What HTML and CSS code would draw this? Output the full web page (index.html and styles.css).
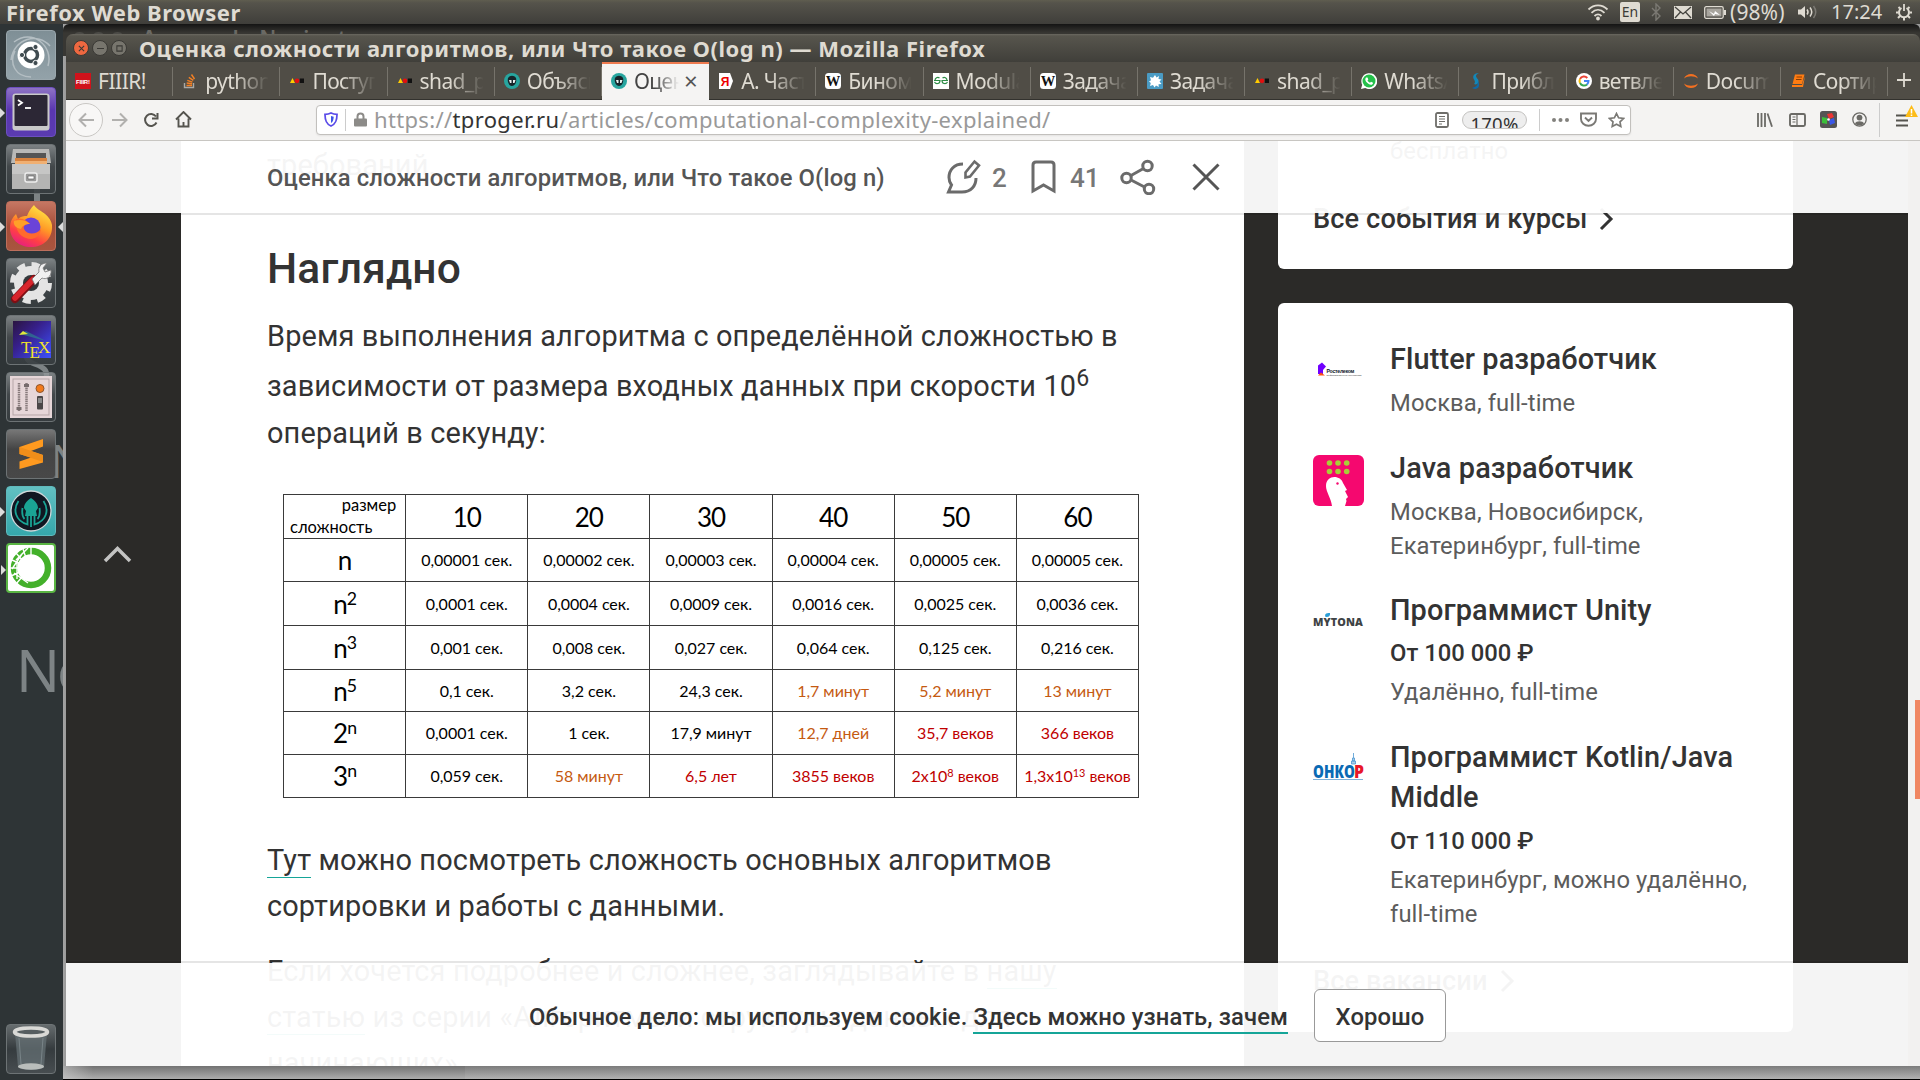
FILE: index.html
```
<!DOCTYPE html>
<html lang="ru">
<head>
<meta charset="utf-8">
<title>Оценка сложности алгоритмов, или Что такое О(log n)</title>
<link rel="stylesheet" href="styles.css">
</head>
<body>
<svg class="defs" width="0" height="0">
  <defs>
    <symbol id="chevron" viewBox="0 0 16 24"><path d="M3 2l10 10L3 22" fill="none" stroke="currentColor" stroke-width="3"/></symbol>
    <symbol id="dots3" viewBox="0 0 16 16"><path d="M1 10l2.500-5L6 10z" fill="#fc0"/><circle cx="8" cy="7.800" r="2.400" fill="#e01010"/><path d="M10.800 5.500H15v4.500h-4.200z" fill="#111"/></symbol>
    <symbol id="octo" viewBox="0 0 16 16"><circle cx="8" cy="8" r="8" fill="#27a59f"/><path d="M4 5c2-3 6-3 8 0 1 4-1 8-4 8S3 9 4 5z" fill="#16252b"/><path d="M5 7h2.500v3H6zM9 7h2.500l-1 3H9z" fill="#e8efef"/></symbol>
    <symbol id="wiki" viewBox="0 0 16 16"><rect width="16" height="16" rx="3.500" fill="#fff"/><text x=".8" y="12.500" font-family="Liberation Serif" font-weight="700" font-size="14" textLength="14.500" lengthAdjust="spacingAndGlyphs" fill="#111">W</text></symbol>
  </defs>
</svg>

<header class="panel">
  <span class="panel-app">Firefox Web Browser</span>
  <div class="tray">
    <svg class="t-wifi" width="22" height="18" viewBox="0 0 22 18" fill="none" stroke="#dfdbd2" stroke-width="1.8"><path d="M1.5 6.500c5.500-5.500 13.500-5.500 19 0M4.500 9.800c4-4 9-4 13 0M7.500 13c2.300-2.300 4.700-2.300 7 0"/><circle cx="11" cy="15.500" r="1" fill="#dfdbd2"/></svg>
    <span class="t-lang">En</span>
    <svg class="t-bt" width="10" height="18" viewBox="0 0 10 18" fill="none" stroke="#7b7973" stroke-width="1.400"><path d="M1 5l8 8-4 4V1l4 4-8 8"/></svg>
    <svg class="t-mail" width="18" height="13" viewBox="0 0 18 13"><path fill="#dfdbd2" d="M0 0h18v13H0z"/><path d="M1 1l8 7 8-7M1 12l5.500-6M17 12l-5.500-6" stroke="#45443f" stroke-width="1.300" fill="none"/></svg>
    <svg class="t-bat" width="22" height="13" viewBox="0 0 22 13"><rect x=".7" y=".7" width="18.500" height="11.600" rx="1.500" fill="none" stroke="#dfdbd2" stroke-width="1.300"/><path fill="#a8a59e" d="M2.500 2.500h15v8h-15z"/><path fill="#dfdbd2" d="M20 4h2v5h-2z"/><path d="M5 5l5 3 1-3 5 4-5-1-1 2z" fill="#fff"/></svg>
    <span class="t-pct">(98%)</span>
    <svg class="t-vol" width="20" height="14" viewBox="0 0 20 14"><path fill="#dfdbd2" d="M0 4.500h3L7 1v12L3 9.500H0z"/><path d="M9 4.500q2 2.500 0 5M12 2.500q3.500 4.500 0 9" fill="none" stroke="#dfdbd2" stroke-width="1.500"/><path d="M15.500 1q4.500 6 0 12" fill="none" stroke="#7b7973" stroke-width="1.500"/></svg>
    <span class="t-time">17:24</span>
    <svg class="t-gear" width="18" height="18" viewBox="0 0 18 18" fill="none" stroke="#dfdbd2"><path d="M6.500 5a5 5 0 1 0 5 0" stroke-width="2"/><path d="M9 1v7" stroke-width="1.800"/><path d="M1 9.500h2.500M14.500 9.500H17M3 15l2-2M15 15l-2-2M9 15v2.500M3.500 4l1.500 1.500M14.500 4L13 5.500" stroke-width="2"/></svg>
  </div>
</header>

<div class="desktop">
  <nav class="launcher">
    <i class="bar"></i><span class="ghost g2">S</span><span class="ghost g3">N</span><span class="ghost g4">No</span>
    <div class="tile ubuntu"><svg viewBox="0 0 50 50"><path d="M5 30C8 8 32 2 44 16M8 12c18-14 40 4 34 24M25 47c-16 0-22-14-16-26" fill="none" stroke="#b4bec3" stroke-width="1.500"/><circle cx="25" cy="25" r="13.500" fill="#fff"/><circle cx="25" cy="25" r="6.500" fill="none" stroke="#3f4b50" stroke-width="3.500"/><g fill="#3f4b50" stroke="#fff" stroke-width="1"><circle cx="16" cy="25" r="2.600"/><circle cx="29.500" cy="17" r="2.600"/><circle cx="29.500" cy="33" r="2.600"/></g></svg></div>
    <div class="tile term on"><svg viewBox="0 0 50 50"><rect x="6.500" y="6.500" width="37" height="37" rx="3" fill="#c9c9c9"/><rect x="8.500" y="8" width="33" height="31" rx="1" fill="#2c2735"/><path d="M12 13l4 2.800-4 2.800" fill="none" stroke="#fff" stroke-width="1.800"/><path d="M19 21h6" stroke="#fff" stroke-width="1.800"/></svg></div>
    <div class="tile"><svg viewBox="0 0 50 50"><path d="M7 5h36l2 14H5z" fill="#b9b9b7"/><path d="M10 9h30v12H10z" fill="#555"/><path d="M9 14h32v8H9z" fill="#d8823d"/><path d="M9 17h32v5H9z" fill="#f0b073"/><path d="M6 20h38v25H6z" fill="#b4b4b3"/><path d="M6 20h38v10H6z" fill="#c6c6c5"/><rect x="19" y="29" width="12" height="9" rx="2" fill="#999" stroke="#eee" stroke-width="1.500"/><path d="M22 32h6v3h-6z" fill="#fff" stroke="#666" stroke-width=".7"/></svg></div>
    <div class="tile fox on active"><svg viewBox="0 0 50 50"><defs><linearGradient id="fx" x1=".8" y1="0" x2=".3" y2="1"><stop offset="0" stop-color="#fff04a"/><stop offset=".45" stop-color="#ff9a26"/><stop offset=".75" stop-color="#ff3f45"/><stop offset="1" stop-color="#e61f80"/></linearGradient></defs><path d="M4 27c0-7 3-11 6-14l2 5c3-3 6-3 9-3 2-5 4-8 7-11 3 6 16 8 18 20 1 14-9 22-21 22S4 38 4 27z" fill="url(#fx)"/><circle cx="25" cy="26" r="9.500" fill="#6a43d8"/><path d="M10 18c5-1 10 0 14 5-4 0-7 1-6 5 3 6 12 6 17 0-1 8-8 12-15 9-7-2-11-9-10-19z" fill="#ff6a2e"/><path d="M8 20c6-2 12-1 16 3-5 0-8 2-9 5-5-1-8-4-7-8z" fill="#ffa028"/></svg></div>
    <div class="tile"><svg viewBox="0 0 50 50"><circle cx="25" cy="25" r="17" fill="#e4e4e4"/><circle cx="25" cy="25" r="18.500" fill="none" stroke="#e4e4e4" stroke-width="5" stroke-dasharray="8 6.530"/><circle cx="25" cy="25" r="8" fill="#33383b"/><path d="M9 41L28 21" stroke="#7d0f14" stroke-width="8" stroke-linecap="round"/><path d="M9 40L27 21.500" stroke="#d8252c" stroke-width="5.500" stroke-linecap="round"/><path d="M26 21l7-7c-1-5 2-9 8-9l-4 5 2 4 6-2c1 7-5 10-9 8l-7 7z" fill="#f0f0f0" stroke="#777" stroke-width=".8"/></svg></div>
    <div class="tile"><svg viewBox="0 0 50 50"><defs><linearGradient id="tx" x1="0" y1="0" x2="1" y2="1"><stop offset="0" stop-color="#2a1440"/><stop offset=".4" stop-color="#37208c"/><stop offset="1" stop-color="#3d52ff"/></linearGradient></defs><rect x="7" y="6" width="38" height="37" fill="url(#tx)"/><path d="M14 19l6-3 20 10z" fill="#2d7f8f" opacity=".7"/><path d="M13 20l4-4 5 3z" fill="#dfe83a"/><text x="15" y="38" font-family="Liberation Serif" font-size="17" fill="#f2e329">T</text><text x="23.500" y="43" font-family="Liberation Serif" font-size="17" fill="#f2e329">E</text><text x="32" y="38" font-family="Liberation Serif" font-size="17" fill="#f2e329">X</text></svg></div>
    <div class="tile"><svg viewBox="0 0 50 50"><rect x="4" y="4" width="42" height="42" fill="#e6d6d8"/><rect x="7" y="7" width="36" height="36" fill="none" stroke="#b5a5a7"/><path d="M13 11v28M20.500 11v28" stroke="#877a7b" stroke-width="2.500" stroke-dasharray="1.500 .7"/><path d="M10.500 35h5v3h-5zM18 12h5v3h-5z" fill="#776c6d"/><circle cx="34" cy="16.500" r="4" fill="#f27a1c" stroke="#8d5630"/><rect x="31" y="24" width="6" height="13.500" rx="1" fill="#4a4647"/><path d="M32 26h4v5h-4z" fill="#888"/></svg></div>
    <div class="tile subl"><svg viewBox="0 0 50 50"><path d="M13.500 18L37 10v7.500L25 22l12 4v7.500L13.500 40v-7.500L25 28.500l-11.500-3.500z" fill="#ff9a1f"/><path d="M37 26L13.500 18v7L37 33z" fill="#f08e1a"/></svg></div>
    <div class="tile krak on"><svg viewBox="0 0 50 50"><circle cx="25" cy="25" r="20" fill="#101722" stroke="#cfd8da" stroke-width="1.300"/><g fill="none" stroke="#1aa394" stroke-width="1.800"><path d="M12.500 15c-6 9-3 20 9 23.500V27M37.500 15c6 9 3 20-9 23.500V27M16.500 22c-1 7 1 10 2 11M33.500 22c1 7-1 10-2 11M25 28v13"/></g><path d="M25 12c5 3 7 7 7 10l-2 3 1 5H19l1-5-2-3c0-3 2-7 7-10z" fill="#1aa394"/></svg></div>
    <div class="tile ana on"><svg viewBox="0 0 50 50"><circle cx="25" cy="25" r="17" fill="none" stroke="#43b02a" stroke-width="6.500"/><path d="M25 3v10M17 6l3 9M10 10l7 8M6 17l9 4M4 25h10M5 33l9-4M10 41l6-7M22 5l-12 12M16 11L6 26M11 19v17M8 30l14 10" stroke="#fff" stroke-width="1.400"/></svg></div>
    <div class="tile trash"><svg viewBox="0 0 50 50"><path d="M9 9l3 34c2 4 24 4 26 0l3-34z" fill="#687377" opacity=".7"/><path d="M13 14l2 26M37 14l-2 26" stroke="#8c989c" opacity=".6"/><ellipse cx="25" cy="8" rx="16.500" ry="4" fill="#555d60" stroke="#d9d9d6" stroke-width="3.500"/><ellipse cx="25" cy="42.500" rx="13" ry="3.200" fill="#b9bdbb"/></svg></div>
  </nav>

  <main class="workspace">
    <div class="backwin"><i></i><i></i><i></i><span>Anaconda Navigator</span></div>
    <section class="window">
      <div class="titlebar">
        <b class="wb close"><svg viewBox="0 0 8 8"><path d="M1 1l6 6M7 1L1 7"/></svg></b><b class="wb"><svg viewBox="0 0 8 8"><path d="M0 4h8"/></svg></b><b class="wb"><svg viewBox="0 0 8 8"><path d="M1 1h6v6H1z"/></svg></b>
        <span class="wtitle">Оценка сложности алгоритмов, или Что такое О(log n) — Mozilla Firefox</span>
      </div>
      <div class="tabs">
        <div class="tab"><svg viewBox="0 0 16 16"><rect width="16" height="16" fill="#d0121b"/><text x="1" y="10.500" font-family="Liberation Sans" font-weight="700" font-size="6" textLength="14" fill="#fff">FIIIR!</text></svg><span>FIIIR!</span></div>
        <div class="tab"><svg viewBox="0 0 16 16"><path d="M2.500 10v4.500h9V10" fill="none" stroke="#aaa9a5" stroke-width="1.400"/><path d="M4.500 12.500h5.500M4.700 10l5.400.7M5.300 7.300l5.100 1.800M6.800 4.300l4.500 3M9.500 1.500l3 4.500" stroke="#f48024" stroke-width="1.400"/></svg><span>python</span></div>
        <div class="tab"><svg viewBox="0 0 16 16"><use href="#dots3"/></svg><span>Поступи</span></div>
        <div class="tab"><svg viewBox="0 0 16 16"><use href="#dots3"/></svg><span>shad_pr</span></div>
        <div class="tab"><svg viewBox="0 0 16 16"><use href="#octo"/></svg><span>Объясн</span></div>
        <div class="tab current"><svg viewBox="0 0 16 16"><use href="#octo"/></svg><span>Оценка</span><em>×</em></div>
        <div class="tab"><svg viewBox="0 0 16 16"><path d="M1 0h11l3 8-3 8H1z" fill="#fff"/><text x="7" y="12.500" text-anchor="middle" font-family="Liberation Sans" font-weight="700" font-size="12" fill="#e00">Я</text></svg><span>А. Част</span></div>
        <div class="tab"><svg viewBox="0 0 16 16"><use href="#wiki"/></svg><span>Бином</span></div>
        <div class="tab"><svg viewBox="0 0 16 16"><rect width="16" height="16" fill="#fff"/><path d="M6.500 5C4.500 3.500 2 5 2 7.500M1 7.500h6C7 11 3 11.500 1.500 9M9.500 5c2-1.500 4.500 0 4.500 2.500M15 7.500H9c0 3.500 4 4 5.500 1.500" fill="none" stroke="#2f8d46" stroke-width="1.200"/></svg><span>Modula</span></div>
        <div class="tab"><svg viewBox="0 0 16 16"><use href="#wiki"/></svg><span>Задача</span></div>
        <div class="tab"><svg viewBox="0 0 16 16"><rect width="16" height="16" rx="1" fill="#4a9bc4"/><path d="M8 2l1.500 2.500L12 3l-.5 3 3 .5-2 2 2 2.500-3 .2.300 2.800L9 12.500 7.500 14.500 6 12l-3 1 .8-3L2 8.500l2-1.200L3 4l3 .7z" fill="#fff"/></svg><span>Задача</span></div>
        <div class="tab"><svg viewBox="0 0 16 16"><use href="#dots3"/></svg><span>shad_pr</span></div>
        <div class="tab"><svg viewBox="0 0 16 16"><path d="M0 16l1.200-4.200A8 8 0 1 1 4.200 15z" fill="#fff"/><circle cx="8" cy="8" r="6.500" fill="#25c04b"/><path d="M5 4.500l1.500 0 .8 2-.8 1c.6 1 1.300 1.700 2.500 2.300l1-1 2 1c0 1.500-1 2-2 2C7 11.500 4 8 4.300 6z" fill="#fff"/></svg><span>WhatsA</span></div>
        <div class="tab"><svg viewBox="0 0 16 16"><path d="M11 0C6 0 4 3 6 6.500 7.500 9 7 10 6 11c2 1 4 0 4.500-2C11 6 8 5 8 3c0-1 1-2 3-3z" fill="#1387b8"/><path d="M4 15c6 3 9-2 6-7 0 4-2 6-6 7z" fill="#0e6aa8"/></svg><span>Прибли</span></div>
        <div class="tab"><svg viewBox="0 0 16 16"><circle cx="8" cy="8" r="8" fill="#fff"/><g fill="none" stroke-width="2"><path d="M11.300 5A4.500 4.500 0 0 0 4 6" stroke="#ea4335"/><path d="M4 6a4.500 4.500 0 0 0 0 4" stroke="#fbbc05"/><path d="M4 10a4.500 4.500 0 0 0 7 1.500" stroke="#34a853"/><path d="M8 8h4.500c0 1.500-.5 2.500-1.500 3.500" stroke="#4285f4"/></g></svg><span>ветвле</span></div>
        <div class="tab"><svg viewBox="0 0 16 16"><path d="M1 5.500C3-.5 13-.5 15 5.500 11 2.500 5 2.500 1 5.500zM1 10.500c2 6 12 6 14 0-4 3-10 3-14 0z" fill="#f37021"/></svg><span>Docum</span></div>
        <div class="tab"><svg viewBox="0 0 16 16"><path d="M5 1.500h9.500L12 11H2.500zM2 12h10l3-9-2 11H2z" fill="#ff7c12"/><path d="M6.500 4h5.500M6 6.500h5.500" stroke="#8b3d00"/></svg><span>Сортир</span></div>
        <div class="newtab"><svg width="14" height="14" viewBox="0 0 14 14"><path d="M7 0v14M0 7h14" stroke="#dfdbd2" stroke-width="1.800"/></svg></div>
      </div>
      <div class="navbar">
        <span class="back"><svg width="17" height="16" viewBox="0 0 17 16"><path d="M16 8H2M8 1.500L1.500 8 8 14.500" stroke="#b1b0ae"/></svg></span>
        <svg class="n-fwd" width="17" height="16" viewBox="0 0 17 16"><path d="M1 8h14M9 1.500L15.500 8 9 14.500" stroke="#b1b0ae"/></svg>
        <svg class="n-rel" width="16" height="16" viewBox="0 0 16 16"><path d="M13 4.500A6 6 0 1 0 13.500 10.500M14.500 1v5.500H9" stroke="#55544f" stroke-width="2"/></svg>
        <svg class="n-home" width="17" height="17" viewBox="0 0 17 17"><path d="M1 8.500L8.500 1 16 8.500M3.500 7.500V15.500h10V7.500M8.500 16v-5" stroke="#55544f" stroke-width="1.900"/></svg>
        <div class="urlbar">
          <svg class="u-shield" width="14" height="15" viewBox="0 0 14 15"><path d="M7 1c2 1 4 1.300 6 1.300 0 6-1 9.700-6 11.700C2 12 1 8.300 1 2.300 3 2.300 5 2 7 1z" stroke="#5a4be8" stroke-width="1.800"/><path d="M7 4v7c2-1.300 2.600-3.500 2.700-6.300z" fill="#3b55e6"/></svg>
          <i class="vr"></i>
          <svg class="u-lock" width="13" height="15" viewBox="0 0 13 15"><path d="M3.500 7V4.500a3 3 0 0 1 6 0V7" stroke="#8c8b88" stroke-width="2"/><rect y="6.500" width="13" height="8" rx="1" fill="#8c8b88"/></svg>
          <span class="url">https://<b>tproger.ru</b>/articles/computational-complexity-explained/</span>
          <svg class="u-read" width="14" height="16" viewBox="0 0 14 16"><rect x="1" y="1" width="12" height="14" rx="1.500" stroke="#6f6e6a" stroke-width="1.800"/><path d="M4 4.500h6M4 7h6M4 9.500h6M4 12h3" stroke="#6f6e6a" stroke-width="1"/></svg>
          <span class="zoom"><b>170%</b></span>
          <i class="vr"></i>
          <svg class="u-dots" width="17" height="4" viewBox="0 0 17 4"><circle cx="2" cy="2" r="2"/><circle cx="8.500" cy="2" r="2"/><circle cx="15" cy="2" r="2"/></svg>
          <svg class="u-pock" width="17" height="15" viewBox="0 0 17 15"><path d="M1 1.500h15V7a7.500 6.800 0 0 1-15 0zM5 5.500L8.500 9 12 5.500" stroke="#7a7975" stroke-width="1.900"/></svg>
          <svg class="u-star" width="17" height="16" viewBox="0 0 17 16"><path d="M8.500 1.500l2.100 4.300 4.900.7-3.500 3.300.8 4.700-4.300-2.200-4.300 2.200.8-4.700L1.500 6.500l4.900-.7z" stroke="#7a7975" stroke-width="1.700"/></svg>
        </div>
        <svg class="n-lib" width="16" height="14" viewBox="0 0 16 14"><path d="M1 0v14M4.500 0v14M8 0v14M10.500 .5L15 13.700" stroke="#6b6a66" stroke-width="1.800"/></svg>
        <svg class="n-side" width="17" height="14" viewBox="0 0 17 14"><rect x="1" y="1" width="15" height="12" rx="1.500" stroke="#6b6a66" stroke-width="1.900"/><path d="M8 1v12M3.500 4h3M3.500 6.500h3M3.500 9h3" stroke="#6b6a66" stroke-width="1.200"/></svg>
        <svg class="n-ext" width="17" height="17" viewBox="0 0 17 17"><rect width="17" height="17" rx="2.500" fill="#555"/><path d="M2 6l5 1v6l-5-1z" fill="#3bbf3b"/><path d="M7 3l5-1 2 4-5 2z" fill="#e33"/><path d="M9 9l5-2 1 5-5 2z" fill="#3a57e8"/><circle cx="8.500" cy="8.500" r="1.300" fill="#fff"/></svg>
        <svg class="n-acc" width="15" height="15" viewBox="0 0 15 15"><circle cx="7.500" cy="7.500" r="6.700" stroke="#6b6a66" stroke-width="1.300"/><circle cx="7.500" cy="5.600" r="2.900" fill="#6b6a66"/><path d="M3 11.500c1-3 8-3 9 0-2 2.500-7 2.500-9 0z" fill="#6b6a66"/></svg>
        <i class="vr tall"></i>
        <svg class="n-menu" width="22" height="22" viewBox="0 0 22 22"><path d="M0 10.500h12M0 15.500h12M0 20.500h12" stroke="#55544f" stroke-width="2"/><path d="M15.500 0L22 12H9z" fill="#fdbc18"/><path d="M15.500 4v4.500M15.500 9.500v1.500" stroke="#fff" stroke-width="1.500"/></svg>
      </div>

      <div class="viewport">
        <div class="page">
          <div class="gutter"><svg width="32" height="18" viewBox="0 0 32 18"><path d="M3 16L15.500 3.500 28 16" fill="none" stroke="#c3c3c2" stroke-width="3.500"/></svg></div>
          <article class="article">
            <p>требований.</p>
            <h2>Наглядно</h2>
            <p class="intro">Время выполнения алгоритма с определённой сложностью в<span class="raised">зависимости от размера входных данных при скорости 10<sup>6</sup></span>операций в секунду:</p>
            <table>
              <tr class="r1"><th class="corner"><span>размер</span><span>сложность</span></th><th>10</th><th>20</th><th>30</th><th>40</th><th>50</th><th>60</th></tr>
              <tr><th>n</th><td>0,00001 сек.</td><td>0,00002 сек.</td><td>0,00003 сек.</td><td>0,00004 сек.</td><td>0,00005 сек.</td><td>0,00005 сек.</td></tr>
              <tr class="r1"><th>n<sup>2</sup></th><td>0,0001 сек.</td><td>0,0004 сек.</td><td>0,0009 сек.</td><td>0,0016 сек.</td><td>0,0025 сек.</td><td>0,0036 сек.</td></tr>
              <tr class="r1"><th>n<sup>3</sup></th><td>0,001 сек.</td><td>0,008 сек.</td><td>0,027 сек.</td><td>0,064 сек.</td><td>0,125 сек.</td><td>0,216 сек.</td></tr>
              <tr class="r2"><th>n<sup>5</sup></th><td>0,1 сек.</td><td>3,2 сек.</td><td>24,3 сек.</td><td class="warm">1,7 минут</td><td class="warm">5,2 минут</td><td class="warm">13 минут</td></tr>
              <tr><th>2<sup>n</sup></th><td>0,0001 сек.</td><td>1 сек.</td><td>17,9 минут</td><td class="warm">12,7 дней</td><td class="hot">35,7 веков</td><td class="hot">366 веков</td></tr>
              <tr><th>3<sup>n</sup></th><td>0,059 сек.</td><td class="warm">58 минут</td><td class="hot">6,5 лет</td><td class="hot">3855 веков</td><td class="hot">2x10<sup>8</sup> веков</td><td class="hot">1,3x10<sup>13</sup> веков</td></tr>
            </table>
            <p><a>Тут</a> можно посмотреть сложность основных алгоритмов<br>сортировки и работы с данными.</p>
            <p>Если хочется подробнее и сложнее, заглядывайте в <a>нашу</a><br><a>статью</a> из серии «Алгоритмы и структуры данных для<br>начинающих».</p>
          </article>
          <aside class="side">
            <div class="card events"><p class="free">бесплатно</p><p class="more">Все события и курсы <svg width="16" height="24"><use href="#chevron"/></svg></p></div>
            <div class="card jobs">
              <div class="job"><div class="logo"><svg width="51" height="51" viewBox="0 0 51 51"><path d="M5 19.500l4-3 4 4-3 3.500v4H5z" fill="#7000ff"/><path d="M5 29.500l3-3 4 3z" fill="#ff4f12"/><text x="13.500" y="26.500" font-family="Liberation Sans" font-weight="700" font-size="5.200" textLength="28" fill="#101828">Ростелеком</text><text x="13.500" y="29.500" font-family="Liberation Sans" font-size="2.500" textLength="35" fill="#333">Информационные Технологии</text></svg></div><div><h3>Flutter разработчик</h3><p class="meta">Москва, full-time</p></div></div>
              <div class="job"><div class="logo"><svg width="51" height="51" viewBox="0 0 51 51"><rect width="51" height="51" rx="6" fill="#f5086f"/><g fill="#a8cf38"><circle cx="16.500" cy="8" r="2.800"/><circle cx="25" cy="8" r="2.800"/><circle cx="33.700" cy="8" r="2.800"/><circle cx="16.500" cy="16.500" r="2.800"/><circle cx="25" cy="16.500" r="2.800"/><circle cx="33.700" cy="16.500" r="2.800"/></g><path d="M19 51c-1-8-6-14-6-20 0-12 15-11 17-3l4 7-2 1 3 6-2 2 .5 2-1.500 5z" fill="#fff"/><circle cx="24.500" cy="28.500" r="1.200" fill="#f5086f"/></svg></div><div><h3>Java разработчик</h3><p class="meta">Москва, Новосибирск,<br>Екатеринбург, full-time</p></div></div>
              <div class="job"><div class="logo"><svg width="51" height="51" viewBox="0 0 51 51"><text x="0" y="28.500" font-family="Open Sans" font-weight="800" font-size="10.500" textLength="50" lengthAdjust="spacingAndGlyphs" fill="#3e4345">MYTONA</text><path d="M12.500 20c-1-3 0-4 4.500-4 .5 2.500-1 4.500-4.500 4z" fill="#2b9fd8"/></svg></div><div><h3>Программист Unity</h3><p class="pay">От 100 000 ₽</p><p class="meta">Удалённо, full-time</p></div></div>
              <div class="job last"><div class="logo"><svg width="51" height="51" viewBox="0 0 51 51"><path d="M40.500 9v5M39.500 14h2v3h-2zM38.500 17h4v3h-4z" stroke="#4c97d1" stroke-width=".8" fill="#a9cdea"/><text x="0" y="34" font-family="Open Sans" font-weight="800" font-size="17" textLength="42" lengthAdjust="spacingAndGlyphs" fill="#0a6ab4">ОНКО</text><text x="41" y="34" font-family="Open Sans" font-weight="800" font-size="17" textLength="10" lengthAdjust="spacingAndGlyphs" fill="#e8162a">Р</text><path d="M0 35.500h50" stroke="#7fb2da"/></svg></div><div><h3>Программист Kotlin/Java<br>Middle</h3><p class="pay">От 110 000 ₽</p><p class="meta">Екатеринбург, можно удалённо,<br>full-time</p></div></div>
              <p class="more">Все вакансии <svg width="16" height="24"><use href="#chevron"/></svg></p>
            </div>
          </aside>
        </div>
        <div class="scroll"><i></i></div>
        <div class="sticky">
          <span class="s-title">Оценка сложности алгоритмов, или Что такое О(log n)</span>
          <svg class="s-com" width="35" height="36" viewBox="0 0 35 36"><path d="M17 5C8 5 3 11 3 18.500c0 3 1 5.500 2.500 7.500L2.500 33H16c9 0 14-6 14-14"/><path d="M19.500 18.500v-5L28.500 2.500l4.500 4-9 11z" stroke-width="2.600"/></svg>
          <span class="s-n1">2</span>
          <svg class="s-book" width="26" height="34" viewBox="0 0 26 34"><path d="M2 31V5q0-3 3-3h15q3 0 3 3v26l-10.500-6z"/></svg>
          <span class="s-n2">41</span>
          <svg class="s-share" width="36" height="36" viewBox="0 0 36 36"><circle cx="27.500" cy="7" r="4.700"/><circle cx="6.500" cy="19" r="4.700"/><circle cx="29" cy="30" r="4.700"/><path d="M11 16.500l12.500-7M11 21l13.500 7"/></svg>
          <svg class="s-x" width="28" height="28" viewBox="0 0 28 28"><path d="M1.500 1.500l25 25M26.500 1.500l-25 25"/></svg>
        </div>
        <div class="cookie">
          <span>Обычное дело: мы используем cookie. <a>Здесь можно узнать, зачем</a></span>
          <button>Хорошо</button>
        </div>
      </div>
    </section>
  </main>
</div>
</body>
</html>
```
FILE: styles.css
```
* { box-sizing: border-box; }
body { margin: 0; width: 1920px; height: 1080px; overflow: hidden; display: flex; flex-direction: column; background: #111; font-family: Roboto, "Noto Sans", sans-serif; }
h2, h3, p { margin: 0; }
.defs { position: absolute; }
svg { flex: none; display: block; }

/* Top panel */
.panel { height: 24px; flex: none; display: flex; align-items: center; justify-content: space-between; padding: 0 7px 0 6px; background: linear-gradient(#5f5d4f, #55534b 3px, #3f3e3a); color: #dfdbd2; font-family: "Noto Sans", sans-serif; font-size: 20px; line-height: 24px; }
.panel-app { font-size: 22px; font-weight: 700; letter-spacing: .5px; padding-bottom: 1px; }
.tray { display: flex; align-items: center; white-space: nowrap; }
.t-lang { width: 20px; height: 20px; margin: 0 11px 0 11px; border-radius: 2px; background: #dfdbd2; color: #3c3b37; font-size: 14px; line-height: 20px; text-align: center; }
.t-bt { margin-right: 13px; }
.t-mail { margin-right: 12px; }
.t-bat { margin-right: 4px; }
.t-pct { width: 57px; font-size: 21px; letter-spacing: .1px; }
.t-vol { margin: 0 13px 0 11px; }
.t-time { width: 53px; letter-spacing: 0; margin-right: 11px; }

.desktop { flex: 1; min-height: 0; display: flex; }

/* Launcher */
.launcher { position: relative; width: 63px; padding: 6px 0 6px 6px; display: flex; flex-direction: column; gap: 7px; background: #2e3436; overflow: hidden; }
.bar { position: absolute; left: 34px; top: 165px; width: 6px; height: 12px; background: #7d8385; }
.ghost { position: absolute; color: #7d8385; font: 58px/60px "Noto Sans", sans-serif; }
.g2 { left: 20px; top: 310px; }
.g3 { left: 50px; top: 406px; font-size: 46px; }
.g4 { left: 16px; top: 616px; letter-spacing: -3px; }
.tile { position: relative; flex: none; width: 50px; height: 50px; border-radius: 4px; border: 1px solid #6d7375; background: linear-gradient(rgba(150,155,157,.75), rgba(70,75,78,.85) 45%, rgba(55,61,64,.9)); }
.tile svg { width: 50px; height: 50px; margin: -1px; }
.ubuntu { background: linear-gradient(#7f8f96, #93a2a9); border-color: #9aa7ad; }
.term { background: linear-gradient(#8e73c4, #5a37b0 45%, #5a3bb0); border-color: #6c4fc0; }
.fox { background: linear-gradient(#c67763, #a64d38 50%, #a8553f); border-color: #bd6f5c; }
.subl { background: linear-gradient(#777, #444 40%, #484848); }
.krak { background: linear-gradient(#62c0c2, #35a7ab); border-color: #5fbabd; }
.ana { background: #fff; border: 2px solid #59b543; }
.ana svg { margin: -2px; }
.trash { margin-top: auto; background: linear-gradient(#666c6e, #353b3e 50%, #474d50); }
.on::before, .active::after { content: ""; position: absolute; top: 20px; left: -7px; border: 5px solid transparent; border-left-color: #dcdcdc; border-right-width: 0; }
.active::after { left: 51px; border: 5px solid transparent; border-right-color: #dcdcdc; border-left-width: 0; }

/* Window */
.workspace { position: relative; flex: 1; min-width: 0; padding: 10px 0 0 3px; background: linear-gradient(90deg, #a3a3a3, #9a9a9a 3px); border-bottom: 1px solid #000; display: flex; flex-direction: column; }
.workspace::after { content: ""; height: 13px; margin-left: -3px; background: linear-gradient(90deg, #ccc9, transparent 30px, transparent 402px, #fff1 402px), linear-gradient(#727272, #adadad); }
.backwin { position: absolute; left: 0; right: 0; top: 0; height: 32px; overflow: hidden; display: flex; gap: 4px; padding: 8px 0 0 9px; background: linear-gradient(#141414, #383733 9px); border-radius: 6px 6px 0 0; }
.backwin i { width: 15px; height: 15px; border-radius: 50%; background: #4c4b47; }
.backwin span { margin: -6px 0 0 13px; color: #6a6964; font: 600 21.500px/24px "Noto Sans", sans-serif; letter-spacing: .8px; }
.window { position: relative; height: 1032px; display: flex; flex-direction: column; }
.titlebar { height: 28px; flex: none; display: flex; align-items: center; gap: 3px; padding-left: 7px; border-radius: 7px 7px 0 0; background: linear-gradient(#6a6860, #57554d 2px, #403f3a); }
.wb { width: 16px; height: 16px; border-radius: 50%; background: #77756d; border: 1px solid #3a3935; display: grid; place-items: center; }
.wb svg { width: 7px; height: 7px; fill: none; stroke: #3a3935; stroke-width: 1.200; }
.wb.close { background: #ee6840; }
.wtitle { margin: 0 0 0 9px; color: #dfdbd2; font: 700 22px/28px "Noto Sans", sans-serif; white-space: nowrap; letter-spacing: .51px; }

.tabs { height: 38px; flex: none; display: flex; background: #504d46; border-bottom: 1px solid #33322e; }
.tab { position: relative; width: 107.200px; flex: none; display: flex; align-items: center; padding: 1px 0 0 9px; gap: 7px; color: #dfdbd2; font: 21px/36px "Noto Sans", sans-serif; }
.tab::after { content: ""; position: absolute; right: 0; top: 5px; width: 1px; height: 29px; background: #76736b; }
.tab svg { width: 16px; height: 16px; }
.tab span { width: 65px; overflow: hidden; white-space: nowrap; letter-spacing: -.6px; -webkit-mask-image: linear-gradient(90deg, #000 45%, transparent 98%); mask-image: linear-gradient(90deg, #000 45%, transparent 98%); }
.tab:first-child span { letter-spacing: -.5px; -webkit-mask-image: none; mask-image: none; }
.current { height: 38px; padding: 0 0 3px 9px; background: #f5f4f3; color: #444; border-top: 2px solid #ef7b50; z-index: 1; }
.current::after { display: none; }
.current span { width: 46px; }
.tab em { margin-left: -3px; font-style: normal; font-size: 24px; color: #555; }
.newtab { padding: 11px 0 0 9px; }

.navbar { height: 41px; flex: none; display: flex; align-items: center; padding: 0 0 1px 3px; background: #f4f3f2; border-bottom: 1px solid #c8c6c2; }
.navbar svg { fill: none; stroke-width: 2; }
.back { flex: none; width: 34px; height: 34px; border: 1px solid #c9c7c4; border-radius: 50%; display: grid; place-items: center; background: #f8f7f6; }
.n-fwd { margin: 0 15px 0 8px; }
.n-home { margin: 0 124px 0 16px; }
.urlbar { width: 1315px; height: 30px; flex: none; display: flex; align-items: center; background: #fff; border: 1px solid #c2c0bd; border-radius: 4px; box-shadow: 0 1px 2px #0001; }
.vr { width: 1px; height: 22px; flex: none; background: #ccc; }
.u-shield { margin: 0 7px; }
.u-lock { margin: 0 7px 0 8px; }
.url { flex: 1; color: #999; font: 22px/26px "Noto Sans", sans-serif; padding-bottom: 2px; white-space: nowrap; letter-spacing: .34px; }
.url b { font-weight: 400; color: #333; }
.zoom { flex: none; width: 65px; height: 18px; margin: 0 12px 0 13px; border: 1px solid #c4c3c1; border-radius: 9px; background: #eee; overflow: hidden; text-align: center; }
.zoom b { display: block; font: 18.500px/24px "Noto Sans", sans-serif; letter-spacing: .2px; color: #333; }
.u-dots { margin-left: 12px; }
.u-dots circle { fill: #82817d; }
.u-pock { margin: 0 11px; }
.u-star { margin-right: 5px; }
.n-lib { margin-left: 126px; }
.n-side { margin: 0 14px 0 16px; }
.n-acc { margin: 0 12px 0 15px; }
.tall { height: 34px; margin-right: 16px; }
.n-menu { margin-top: -8px; }

/* Web page */
.viewport { position: relative; flex: 1; min-height: 0; overflow: hidden; display: flex; background: #2b2a28; }
.page { width: 1842px; display: flex; align-items: flex-start; }
.gutter { width: 115px; padding: 404px 0 0 36px; }
.article { width: 1063px; height: 925px; overflow: hidden; padding: 0 86px; background: #fff; color: #333; font-size: 28.900px; line-height: 46.240px; letter-spacing: .135px; }
.article p { white-space: nowrap; margin-bottom: 18px; }
.article p:first-child { margin: 1px 0 56px; }
.article h2 { font-size: 42.500px; line-height: 49px; font-weight: 500; letter-spacing: .2px; margin-bottom: 19.500px; }
.article .intro { height: 142px; margin-bottom: 39.500px; }
.raised { display: block; margin: 4.500px 0 .400px; }
.article p sup { font-size: 80%; line-height: 0; vertical-align: .42em; }
.article a { border-bottom: 1px solid #15a598; }
table { border-collapse: collapse; table-layout: fixed; width: 856px; margin: 0 0 39px 16px; color: #000; font-family: Lato, "Noto Sans", sans-serif; line-height: 1; }
th, td { border: 1px solid #3a3a3a; padding: 0; text-align: center; font-weight: 400; font-size: 16px; letter-spacing: -.02px; }
th { font-size: 26px; letter-spacing: -1px; }
tr { height: 43px; }
.r1 { height: 44px; }
.r2 { height: 42px; }
table sup { font-size: 68%; line-height: 0; vertical-align: .5em; }
.corner span { display: block; font-size: 16.500px; letter-spacing: 0; line-height: 21.500px; text-align: left; padding-left: 6px; }
.corner span:first-child { text-align: right; padding-right: 9px; }
.warm { color: #c55a11; }
.hot { color: #c00000; }

.side { width: 515px; margin-left: 34px; color: #333; letter-spacing: .11px; }
.card { background: #fff; border-radius: 6px; padding: 0 35px; }
.card.events { height: 128px; margin-bottom: 34px; padding-top: .1px; border-radius: 0 0 6px 6px; }
.free { padding-left: 77px; font-size: 23.800px; line-height: 34px; margin-top: -7px; }
.more { display: flex; align-items: center; gap: 11px; font-size: 27.200px; font-weight: 500; line-height: 40px; white-space: nowrap; }
.events .more { padding-top: 31px; }
.jobs { height: 729px; padding-top: 36px; }
.job { display: flex; margin-bottom: 27.700px; white-space: nowrap; }
.logo { width: 77px; flex: none; padding-top: 7px; }
.job h3 { font-size: 28.900px; line-height: 40px; font-weight: 500; margin-bottom: 7px; }
.pay { font-size: 23.800px; line-height: 34px; font-weight: 500; margin-bottom: 5px; letter-spacing: .02px; }
.job h3:has(+ .pay) { margin-bottom: 6px; }
.job.last h3 { margin-bottom: 7px; }
.job.last { margin-bottom: 30px; }
.meta { font-size: 23.800px; line-height: 34px; color: #5c5c5c; }

.scroll { width: 12px; background: #f2f1f0; padding: 559px 0 0 7px; }
.scroll i { display: block; height: 99px; background: #f08763; }

.sticky { position: absolute; left: 0; top: 0; width: 1842px; height: 74px; padding: 0 0 0 201px; display: flex; align-items: center; background: linear-gradient(#fffffff2, #fffffff2) 0 0 / 100% 72px no-repeat; border-bottom: 2px solid #0000001a; color: #555; font-size: 23.800px; font-weight: 500; white-space: nowrap; }
.sticky svg { fill: none; stroke: #6b6b6b; stroke-width: 3; }
.sticky .s-x { stroke: #555; margin: 0 0 1px 36px; }
.s-title { width: 679px; letter-spacing: .12px; padding-top: 2px; }
.s-n1 { width: 27px; margin-left: 11px; color: #777; font-size: 26px; padding-top: 1px; }
.s-book { margin-left: 12px; }
.s-n2 { width: 50px; margin-left: 13px; color: #777; font-size: 26px; padding-top: 1px; }
.cookie { position: absolute; left: 0; bottom: 0; width: 1842px; height: 105px; display: flex; align-items: center; padding: 1px 0 0 463px; border-top: 2px solid #0000001a; background: #fffffff2; background-clip: padding-box; color: #333; font-size: 23.800px; font-weight: 500; white-space: nowrap; }
.cookie span { width: 785px; padding-top: 3px; letter-spacing: .11px; }
.cookie a { border-bottom: 2px solid #15a598; padding-bottom: 1px; }
.cookie button { width: 132px; height: 53px; background: #fff; border: 1px solid #999; border-radius: 6px; color: #333; font: 500 23.800px Roboto, sans-serif; padding: 3px 0 0; letter-spacing: .12px; }
```
